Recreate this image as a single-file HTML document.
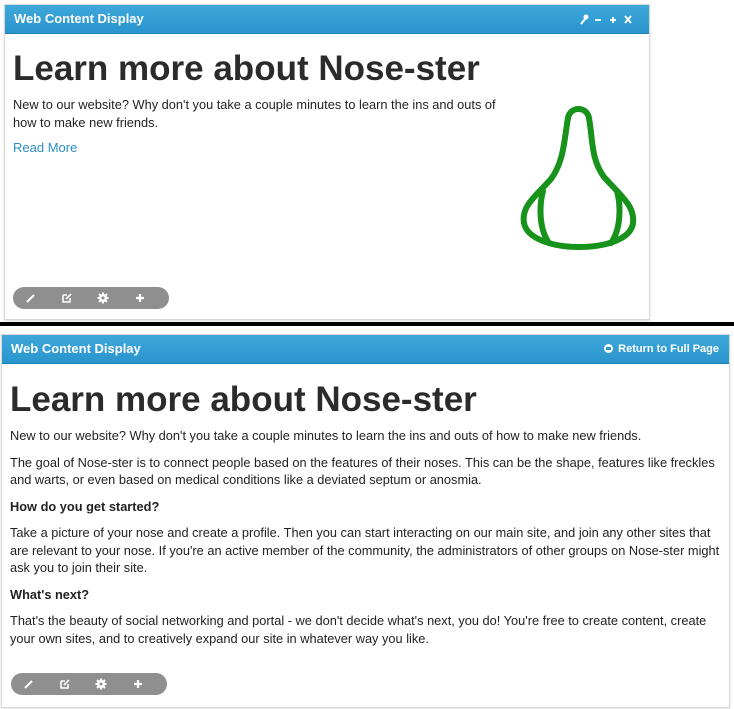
<!DOCTYPE html>
<html><head><style>
body{margin:0;width:734px;height:709px;background:#fff;position:relative;overflow:hidden;font-family:"Liberation Sans",Arial,sans-serif;color:#333}
.panel{position:absolute;background:#fff;border:1px solid #d8d8d8;box-shadow:0 1px 2px rgba(0,0,0,.15)}
.hdr{position:absolute;left:0;right:0;top:0;height:28px;background:linear-gradient(#3ea8dc,#2a95cd);border-bottom:1px solid #1f7fb3;color:#fff;font-weight:bold;font-size:13px;line-height:28px;padding-left:9px}
.hdr .r{position:absolute;right:10px;top:0;font-size:11px}
h1{position:absolute;margin:0;font-size:35px;font-weight:bold;color:#2b2b2b;letter-spacing:0}
p{margin:0 0 9px 0;font-size:12.8px;line-height:17.5px;color:#222}
.b{font-weight:bold}
a{color:#2a8fc7;text-decoration:none;font-size:13px}
.bar{position:absolute;width:156px;height:22px;border-radius:11px;background:#8f8f8f}
.bar svg{position:absolute;top:5px}
</style></head><body>
<div class="panel" style="left:4px;top:4px;width:644px;height:314px">
 <div class="hdr">Web Content Display<span class="r" style="top:8px;right:10px;height:12px;width:60px">
  <svg width="60" height="12" viewBox="0 0 60 12" style="position:absolute;left:0;top:0"><path d="M2,11 L6,6" stroke="#fff" stroke-width="2"/><circle cx="7" cy="4" r="2.5" fill="#fff"/><path d="M16,7H22M31,7H37M34,4V10M46,3L52,10M52,3L46,10" stroke="#fff" stroke-width="1.8"/></svg></span></div>
 <h1 style="left:8px;top:44px">Learn more about Nose-ster</h1>
 <div style="position:absolute;left:8px;top:91px;width:500px">
  <p>New to our website? Why don't you take a couple minutes to learn the ins and outs of how to make new friends.</p>
  <a style="position:relative;top:-1px">Read More</a>
 </div>
 <svg style="position:absolute;left:0;top:0" width="644" height="314" viewBox="4 4 644 314">
  <g fill="none" stroke="#17921a" stroke-width="6" stroke-linecap="round" stroke-linejoin="round">
   <path d="M567,117 C569,105 586,105 588,117 C592,140 590,158 603,176 C620,195 634,205 632,222 C630,238 605,246 578,246 C552,246 526,238 523,222 C520,205 535,195 550,178 C563,160 563,140 567,117 Z"/>
   <path d="M542,190 C538,205 538,228 548,242"/>
   <path d="M616,190 C620,205 620,228 610,242"/>
  </g>
 </svg>
 <div class="bar" style="left:8px;top:282px">
  <svg style="left:12px" width="12" height="12" viewBox="0 0 12 12"><path d="M2,10 L9,3" stroke="#fff" stroke-width="2"/></svg>
  <svg style="left:48px" width="12" height="12" viewBox="0 0 12 12"><path d="M2,3 H6 M2,3 V10 H9 V6 M5,7 L10,2" stroke="#fff" stroke-width="1.6" fill="none"/></svg>
  <svg style="left:84px" width="12" height="12" viewBox="0 0 12 12"><circle cx="6" cy="6" r="4" fill="#fff"/><path d="M6,0.5V11.5M0.5,6H11.5M2,2L10,10M10,2L2,10" stroke="#fff" stroke-width="2"/><circle cx="6" cy="6" r="1.5" fill="#8f8f8f"/></svg>
  <svg style="left:121px" width="12" height="12" viewBox="0 0 12 12"><path d="M6,2V10M2,6H10" stroke="#fff" stroke-width="2.2"/></svg>
 </div>
</div>
<div style="position:absolute;left:0;top:322px;width:734px;height:4px;background:#000"></div>
<div class="panel" style="left:1px;top:334px;width:727px;height:372px">
 <div class="hdr">Web Content Display<span class="r"><span style="display:inline-block;width:9px;height:9px;border-radius:50%;background:#fff;vertical-align:-1px;margin-right:5px;position:relative"><span style="position:absolute;left:2px;top:3px;width:5px;height:3px;background:#2a95cd"></span></span>Return to Full Page</span></div>
 <h1 style="left:8px;top:45px">Learn more about Nose-ster</h1>
 <div style="position:absolute;left:8px;top:92px;width:715px">
  <p>New to our website? Why don't you take a couple minutes to learn the ins and outs of how to make new friends.</p>
  <p>The goal of Nose-ster is to connect people based on the features of their noses. This can be the shape, features like freckles and warts, or even based on medical conditions like a deviated septum or anosmia.</p>
  <p class="b">How do you get started?</p>
  <p>Take a picture of your nose and create a profile. Then you can start interacting on our main site, and join any other sites that are relevant to your nose. If you're an active member of the community, the administrators of other groups on Nose-ster might ask you to join their site.</p>
  <p class="b">What's next?</p>
  <p>That's the beauty of social networking and portal - we don't decide what's next, you do! You're free to create content, create your own sites, and to creatively expand our site in whatever way you like.</p>
 </div>
 <div class="bar" style="left:9px;top:338px">
  <svg style="left:12px" width="12" height="12" viewBox="0 0 12 12"><path d="M2,10 L9,3" stroke="#fff" stroke-width="2"/></svg>
  <svg style="left:48px" width="12" height="12" viewBox="0 0 12 12"><path d="M2,3 H6 M2,3 V10 H9 V6 M5,7 L10,2" stroke="#fff" stroke-width="1.6" fill="none"/></svg>
  <svg style="left:84px" width="12" height="12" viewBox="0 0 12 12"><circle cx="6" cy="6" r="4" fill="#fff"/><path d="M6,0.5V11.5M0.5,6H11.5M2,2L10,10M10,2L2,10" stroke="#fff" stroke-width="2"/><circle cx="6" cy="6" r="1.5" fill="#8f8f8f"/></svg>
  <svg style="left:121px" width="12" height="12" viewBox="0 0 12 12"><path d="M6,2V10M2,6H10" stroke="#fff" stroke-width="2.2"/></svg>
 </div>
</div>
</body></html>
